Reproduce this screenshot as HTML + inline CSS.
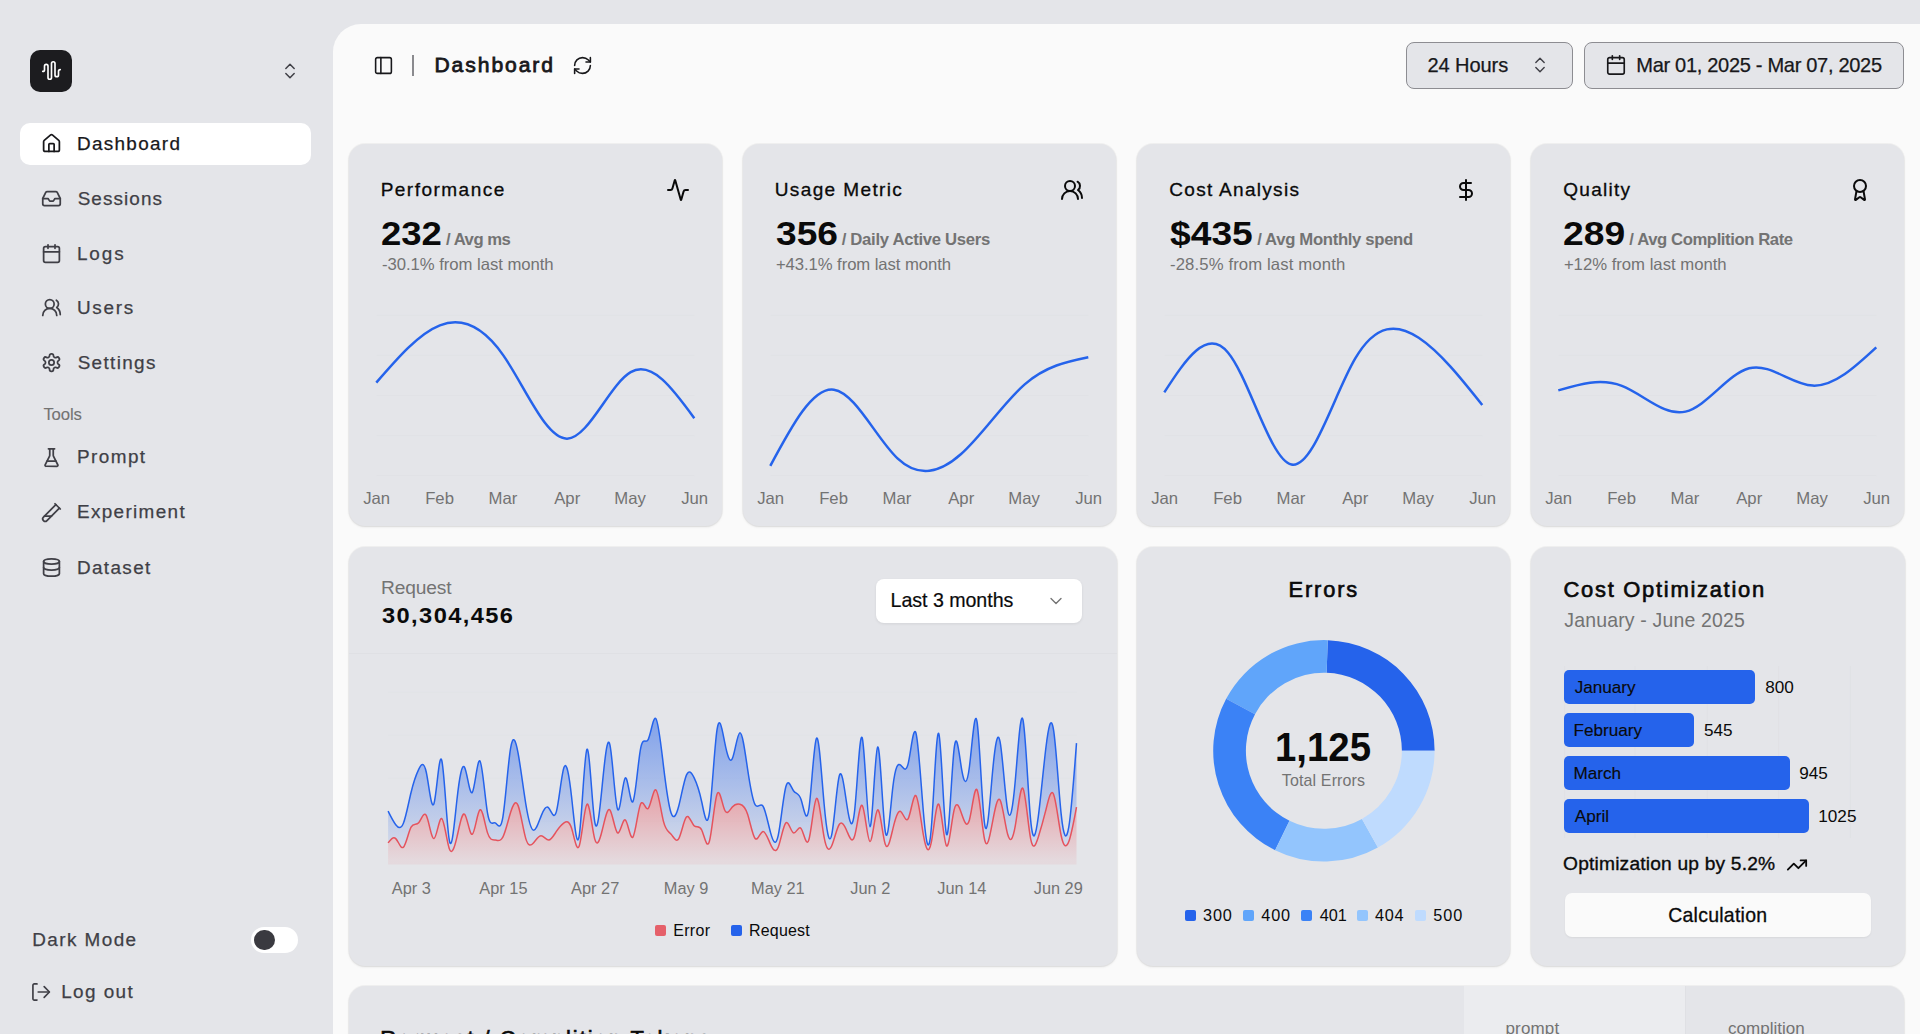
<!DOCTYPE html>
<html><head><meta charset="utf-8"><title>Dashboard</title>
<style>
html,body{margin:0;padding:0}
body{width:1920px;height:1034px;overflow:hidden;position:relative;background:#e4e5e9;font-family:"Liberation Sans",sans-serif}
.box{position:absolute;box-sizing:border-box}
.ic{position:absolute;overflow:visible}
.t{position:absolute;white-space:nowrap;line-height:1;font-family:"Liberation Sans",sans-serif}
.card{background:#e4e5e9;border-radius:16px;box-shadow:0 0 0 1px rgba(0,0,0,0.035),0 1px 3px rgba(0,0,0,0.07),0 1px 2px rgba(0,0,0,0.04)}
.btn{background:#e4e5e9;border:1.3px solid #8d8d92;border-radius:8px}
.sel{background:#ffffff;border-radius:8px;box-shadow:0 1px 3px rgba(0,0,0,0.08)}
</style></head><body>
<div class="box" style="left:30px;top:50px;width:42px;height:42px;border-radius:10px;background:#1c1c1f"></div>
<svg class="ic" style="left:40.5px;top:60px;" width="21" height="21" viewBox="0 0 24 24" fill="none" stroke="#ffffff" stroke-width="1.9" stroke-linecap="round" stroke-linejoin="round"><path d="M2 13a2 2 0 0 0 2-2V7a2 2 0 0 1 4 0v13a2 2 0 0 0 4 0V4a2 2 0 0 1 4 0v13a2 2 0 0 0 4 0v-4a2 2 0 0 1 2-2"/></svg>
<svg class="ic" style="left:280px;top:60.5px;" width="20" height="20" viewBox="0 0 24 24" fill="none" stroke="#3f3f46" stroke-width="1.8" stroke-linecap="round" stroke-linejoin="round"><path d="m7 15 5 5 5-5"/><path d="m7 9 5-5 5 5"/></svg>
<div class="box" style="left:20px;top:123px;width:291px;height:42px;border-radius:10px;background:#ffffff"></div>
<svg class="ic" style="left:40.5px;top:133.0px;" width="21" height="21" viewBox="0 0 24 24" fill="none" stroke="#18181b" stroke-width="2" stroke-linecap="round" stroke-linejoin="round"><path d="M15 21v-8a1 1 0 0 0-1-1h-4a1 1 0 0 0-1 1v8"/><path d="M3 10a2 2 0 0 1 .709-1.528l7-5.999a2 2 0 0 1 2.582 0l7 5.999A2 2 0 0 1 21 10v9a2 2 0 0 1-2 2H5a2 2 0 0 1-2-2z"/></svg>
<svg class="ic" style="left:40.5px;top:188.4px;" width="21" height="21" viewBox="0 0 24 24" fill="none" stroke="#3f3f46" stroke-width="2" stroke-linecap="round" stroke-linejoin="round"><polyline points="22 12 16 12 14 15 10 15 8 12 2 12"/><path d="M5.45 5.11 2 12v6a2 2 0 0 0 2 2h16a2 2 0 0 0 2-2v-6l-3.45-6.89A2 2 0 0 0 16.76 4H7.24a2 2 0 0 0-1.79 1.11z"/></svg>
<svg class="ic" style="left:40.5px;top:243.39999999999998px;" width="21" height="21" viewBox="0 0 24 24" fill="none" stroke="#3f3f46" stroke-width="2" stroke-linecap="round" stroke-linejoin="round"><path d="M8 2v4"/><path d="M16 2v4"/><rect width="18" height="18" x="3" y="4" rx="2"/><path d="M3 10h18"/></svg>
<svg class="ic" style="left:40.5px;top:297.3px;" width="21" height="21" viewBox="0 0 24 24" fill="none" stroke="#3f3f46" stroke-width="2" stroke-linecap="round" stroke-linejoin="round"><path d="M18 21a8 8 0 0 0-16 0"/><circle cx="10" cy="8" r="5"/><path d="M22 20c0-3.37-2-6.5-4-8a5 5 0 0 0-.45-8.3"/></svg>
<svg class="ic" style="left:40.5px;top:352.3px;" width="21" height="21" viewBox="0 0 24 24" fill="none" stroke="#3f3f46" stroke-width="2" stroke-linecap="round" stroke-linejoin="round"><path d="M12.22 2h-.44a2 2 0 0 0-2 2v.18a2 2 0 0 1-1 1.73l-.43.25a2 2 0 0 1-2 0l-.15-.08a2 2 0 0 0-2.73.73l-.22.38a2 2 0 0 0 .73 2.73l.15.1a2 2 0 0 1 1 1.72v.51a2 2 0 0 1-1 1.74l-.15.09a2 2 0 0 0-.73 2.73l.22.38a2 2 0 0 0 2.73.73l.15-.08a2 2 0 0 1 2 0l.43.25a2 2 0 0 1 1 1.73V20a2 2 0 0 0 2 2h.44a2 2 0 0 0 2-2v-.18a2 2 0 0 1 1-1.73l.43-.25a2 2 0 0 1 2 0l.15.08a2 2 0 0 0 2.73-.73l.22-.39a2 2 0 0 0-.73-2.73l-.15-.08a2 2 0 0 1-1-1.74v-.5a2 2 0 0 1 1-1.74l.15-.09a2 2 0 0 0 .73-2.73l-.22-.38a2 2 0 0 0-2.73-.73l-.15.08a2 2 0 0 1-2 0l-.43-.25a2 2 0 0 1-1-1.73V4a2 2 0 0 0-2-2z"/><circle cx="12" cy="12" r="3"/></svg>
<svg class="ic" style="left:40.5px;top:446.9px;" width="21" height="21" viewBox="0 0 24 24" fill="none" stroke="#3f3f46" stroke-width="2" stroke-linecap="round" stroke-linejoin="round"><path d="M10 2v7.527a2 2 0 0 1-.211.896L4.72 20.55a1 1 0 0 0 .9 1.45h12.76a1 1 0 0 0 .9-1.45l-5.069-10.127A2 2 0 0 1 14 9.527V2"/><path d="M8.5 2h7"/><path d="M7 16h10"/></svg>
<svg class="ic" style="left:40.5px;top:501.9px;" width="21" height="21" viewBox="0 0 24 24" fill="none" stroke="#3f3f46" stroke-width="2" stroke-linecap="round" stroke-linejoin="round"><path d="M21 7 6.82 21.18a2.83 2.83 0 0 1-3.99-.01a2.83 2.83 0 0 1 0-4L17 3"/><path d="m16 2 6 6"/><path d="M12 16H4"/></svg>
<svg class="ic" style="left:40.5px;top:557.0px;" width="21" height="21" viewBox="0 0 24 24" fill="none" stroke="#3f3f46" stroke-width="2" stroke-linecap="round" stroke-linejoin="round"><ellipse cx="12" cy="5" rx="9" ry="3"/><path d="M3 5V19A9 3 0 0 0 21 19V5"/><path d="M3 12A9 3 0 0 0 21 12"/></svg>
<div class="box" style="left:251px;top:927px;width:47px;height:26px;border-radius:13px;background:#ffffff"></div>
<div class="box" style="left:254px;top:929.5px;width:20.5px;height:20.5px;border-radius:50%;background:#3a3a40"></div>
<svg class="ic" style="left:31px;top:982px;" width="20" height="20" viewBox="0 0 24 24" fill="none" stroke="#3f3f46" stroke-width="2" stroke-linecap="round" stroke-linejoin="round"><path d="M7.2 2.3H3.9a1.6 1.6 0 0 0-1.6 1.6v16.2a1.6 1.6 0 0 0 1.6 1.6h3.3"/><path d="M8.6 12h13"/><path d="m15.8 5.6 6.3 6.4-6.3 6.4"/></svg>
<div class="box" style="left:333px;top:23.5px;width:1600px;height:1100px;border-top-left-radius:28px;background:#fafafa"></div>
<svg class="ic" style="left:372.5px;top:55px;" width="21" height="21" viewBox="0 0 24 24" fill="none" stroke="#18181b" stroke-width="1.8" stroke-linecap="round" stroke-linejoin="round"><rect width="18" height="18" x="3" y="3" rx="2"/><path d="M9 3v18"/></svg>
<div class="box" style="left:412px;top:55px;width:2px;height:20.5px;background:#8a8a8e"></div>
<svg class="ic" style="left:571.5px;top:55px;" width="21" height="21" viewBox="0 0 24 24" fill="none" stroke="#18181b" stroke-width="1.8" stroke-linecap="round" stroke-linejoin="round"><path d="M3 12a9 9 0 0 1 9-9 9.75 9.75 0 0 1 6.74 2.74L21 8"/><path d="M21 3v5h-5"/><path d="M21 12a9 9 0 0 1-9 9 9.75 9.75 0 0 1-6.74-2.74L3 16"/><path d="M8 16H3v5"/></svg>
<div class="box btn" style="left:1406px;top:42px;width:166.5px;height:46.5px;"></div>
<svg class="ic" style="left:1530px;top:54.8px;" width="20" height="20" viewBox="0 0 24 24" fill="none" stroke="#3f3f46" stroke-width="1.7" stroke-linecap="round" stroke-linejoin="round"><path d="m7 15 5 5 5-5"/><path d="m7 9 5-5 5 5"/></svg>
<div class="box btn" style="left:1584px;top:42px;width:320px;height:46.5px;"></div>
<svg class="ic" style="left:1605px;top:53.8px;" width="22" height="22" viewBox="0 0 24 24" fill="none" stroke="#18181b" stroke-width="1.8" stroke-linecap="round" stroke-linejoin="round"><path d="M8 2v4"/><path d="M16 2v4"/><rect width="18" height="18" x="3" y="4" rx="2"/><path d="M3 10h18"/></svg>
<div class="box card" style="left:349px;top:144px;width:373px;height:382px"></div>
<svg class="ic" style="left:665.5px;top:177.5px;" width="24" height="24" viewBox="0 0 24 24" fill="none" stroke="#0a0a0a" stroke-width="2" stroke-linecap="round" stroke-linejoin="round"><path d="M22 12h-2.48a2 2 0 0 0-1.93 1.46l-2.35 8.36a.25.25 0 0 1-.48 0L9.24 2.18a.25.25 0 0 0-.48 0l-2.35 8.36A2 2 0 0 1 4.49 12H2"/></svg>
<svg class="ic" style="left:0;top:0" width="1920" height="1034"><g stroke="#e1e2e6" stroke-width="1"><line x1="376.5" x2="694.4" y1="315.4" y2="315.4"/><line x1="376.5" x2="694.4" y1="355.4" y2="355.4"/><line x1="376.5" x2="694.4" y1="395.5" y2="395.5"/><line x1="376.5" x2="694.4" y1="435.6" y2="435.6"/><line x1="376.5" x2="694.4" y1="475.7" y2="475.7"/></g><path d="M376.3,382.66C397.5,358.13,418.7,333.6,439.9,325.36C461.1,317.12,482.3,325.18,503.5,355.66C524.7,386.14,545.9,439.06,567.1,438.64C588.3,438.22,609.5,384.47,630.7,372.17C651.9,359.87,673.1,389.03,694.3,418.18" fill="none" stroke="#2563eb" stroke-width="2.5"/></svg>
<div class="box card" style="left:743px;top:144px;width:373px;height:382px"></div>
<svg class="ic" style="left:1059.5px;top:177.5px;" width="24" height="24" viewBox="0 0 24 24" fill="none" stroke="#0a0a0a" stroke-width="2" stroke-linecap="round" stroke-linejoin="round"><path d="M18 21a8 8 0 0 0-16 0"/><circle cx="10" cy="8" r="5"/><path d="M22 20c0-3.37-2-6.5-4-8a5 5 0 0 0-.45-8.3"/></svg>
<svg class="ic" style="left:0;top:0" width="1920" height="1034"><g stroke="#e1e2e6" stroke-width="1"><line x1="770.5" x2="1088.4" y1="315.4" y2="315.4"/><line x1="770.5" x2="1088.4" y1="355.4" y2="355.4"/><line x1="770.5" x2="1088.4" y1="395.5" y2="395.5"/><line x1="770.5" x2="1088.4" y1="435.6" y2="435.6"/><line x1="770.5" x2="1088.4" y1="475.7" y2="475.7"/></g><path d="M770.3,465.88C791.5,426.26,812.7,386.64,833.9,389.66C855.1,392.68,876.3,438.33,897.5,458.41C918.7,478.49,939.9,472.99,961.1,454.05C982.3,435.11,1003.5,402.73,1024.7,384.35C1045.9,365.97,1067.1,361.6,1088.3,357.22" fill="none" stroke="#2563eb" stroke-width="2.5"/></svg>
<div class="box card" style="left:1137px;top:144px;width:373px;height:382px"></div>
<svg class="ic" style="left:1453.5px;top:177.5px;" width="24" height="24" viewBox="0 0 24 24" fill="none" stroke="#0a0a0a" stroke-width="2" stroke-linecap="round" stroke-linejoin="round"><line x1="12" x2="12" y1="2" y2="22"/><path d="M17 5H9.5a3.5 3.5 0 0 0 0 7h5a3.5 3.5 0 0 1 0 7H6"/></svg>
<svg class="ic" style="left:0;top:0" width="1920" height="1034"><g stroke="#e1e2e6" stroke-width="1"><line x1="1164.5" x2="1482.4" y1="315.4" y2="315.4"/><line x1="1164.5" x2="1482.4" y1="355.4" y2="355.4"/><line x1="1164.5" x2="1482.4" y1="395.5" y2="395.5"/><line x1="1164.5" x2="1482.4" y1="435.6" y2="435.6"/><line x1="1164.5" x2="1482.4" y1="475.7" y2="475.7"/></g><path d="M1164.3,392.33C1185.5,359.85,1206.7,327.37,1227.9,352.45C1249.1,377.53,1270.3,460.16,1291.5,464.53C1312.7,468.9,1333.9,395.01,1355.1,358.72C1376.3,322.43,1397.5,323.75,1418.7,337.73C1439.9,351.71,1461.1,378.37,1482.3,405.02" fill="none" stroke="#2563eb" stroke-width="2.5"/></svg>
<div class="box card" style="left:1531px;top:144px;width:373px;height:382px"></div>
<svg class="ic" style="left:1847.5px;top:177.5px;" width="24" height="24" viewBox="0 0 24 24" fill="none" stroke="#0a0a0a" stroke-width="2" stroke-linecap="round" stroke-linejoin="round"><path d="m15.477 12.89 1.515 8.526a.5.5 0 0 1-.81.47l-3.58-2.687a1 1 0 0 0-1.197 0l-3.586 2.686a.5.5 0 0 1-.81-.469l1.514-8.526"/><circle cx="12" cy="8" r="6"/></svg>
<svg class="ic" style="left:0;top:0" width="1920" height="1034"><g stroke="#e1e2e6" stroke-width="1"><line x1="1558.5" x2="1876.4" y1="315.4" y2="315.4"/><line x1="1558.5" x2="1876.4" y1="355.4" y2="355.4"/><line x1="1558.5" x2="1876.4" y1="395.5" y2="395.5"/><line x1="1558.5" x2="1876.4" y1="435.6" y2="435.6"/><line x1="1558.5" x2="1876.4" y1="475.7" y2="475.7"/></g><path d="M1558.3,390.41C1579.5,384.05,1600.7,377.69,1621.9,385.85C1643.1,394.01,1664.3,416.69,1685.5,411.65C1706.7,406.61,1727.9,373.84,1749.1,368.33C1770.3,362.82,1791.5,384.56,1812.7,385.6C1833.9,386.64,1855.1,366.97,1876.3,347.31" fill="none" stroke="#2563eb" stroke-width="2.5"/></svg>
<div class="box card" style="left:349px;top:547px;width:768px;height:419px"></div>
<div class="box" style="left:349px;top:652.5px;width:768px;height:1px;background:#dfe0e4"></div>
<div class="box sel" style="left:875.5px;top:578.5px;width:206.5px;height:44.5px"></div>
<svg class="ic" style="left:1046px;top:590.5px;" width="20" height="20" viewBox="0 0 24 24" fill="none" stroke="#737373" stroke-width="1.6" stroke-linecap="round" stroke-linejoin="round"><path d="m6 9 6 6 6-6"/></svg>
<svg class="ic" style="left:0;top:0" width="1920" height="1034">
<defs>
<linearGradient id="gB" x1="0" y1="0" x2="0" y2="1"><stop offset="5%" stop-color="#2563eb" stop-opacity="0.5"/><stop offset="95%" stop-color="#2563eb" stop-opacity="0.1"/></linearGradient>
<linearGradient id="gR" x1="0" y1="0" x2="0" y2="1"><stop offset="5%" stop-color="#e8505a" stop-opacity="0.45"/><stop offset="95%" stop-color="#e8505a" stop-opacity="0.08"/></linearGradient>
</defs>
<g stroke="#e2e3e7" stroke-width="1"><line x1="388" x2="1077" y1="692.4" y2="692.4"/><line x1="388" x2="1077" y1="735.4" y2="735.4"/><line x1="388" x2="1077" y1="778.4" y2="778.4"/><line x1="388" x2="1077" y1="821.4" y2="821.4"/></g>
<path d="M388.1,842.9C390.65,839.5,393.2,836.1,395.75,838.6C398.3,841.1,400.85,849.49,403.4,847.2C405.95,844.91,408.5,831.93,411.05,827.13C413.6,822.33,416.15,825.71,418.7,822.83C421.25,819.96,423.79,810.83,426.34,815.67C428.89,820.51,431.44,839.32,433.99,838.6C436.54,837.88,439.09,817.64,441.64,818.53C444.19,819.43,446.74,841.46,449.29,848.63C451.84,855.81,454.39,848.14,456.94,837.17C459.49,826.19,462.04,811.92,464.59,814.23C467.14,816.54,469.69,835.44,472.24,834.3C474.79,833.16,477.34,812,479.89,809.93C482.44,807.87,484.99,824.9,487.54,832.87C490.09,840.84,492.63,839.75,495.18,840.03C497.73,840.32,500.28,841.97,502.83,837.17C505.38,832.36,507.93,821.09,510.48,812.8C513.03,804.51,515.58,799.22,518.13,805.63C520.68,812.05,523.23,830.18,525.78,838.6C528.33,847.02,530.88,845.73,533.43,842.9C535.98,840.07,538.53,835.71,541.08,835.73C543.63,835.75,546.18,840.16,548.73,840.03C551.28,839.91,553.83,835.26,556.38,831.43C558.93,827.61,561.47,824.61,564.02,822.83C566.57,821.06,569.12,820.51,571.67,828.57C574.22,836.63,576.77,853.3,579.32,845.77C581.87,838.24,584.42,806.51,586.97,804.2C589.52,801.89,592.07,829,594.62,838.6C597.17,848.2,599.72,840.3,602.27,830C604.82,819.7,607.37,807,609.92,809.93C612.47,812.87,615.02,831.45,617.57,832.87C620.12,834.28,622.67,818.54,625.22,819.97C627.77,821.4,630.31,840.01,632.86,837.17C635.41,834.33,637.96,810.04,640.51,804.2C643.06,798.36,645.61,810.95,648.16,808.5C650.71,806.05,653.26,788.54,655.81,789.87C658.36,791.19,660.91,811.34,663.46,821.4C666.01,831.46,668.56,831.44,671.11,834.3C673.66,837.16,676.21,842.92,678.76,838.6C681.31,834.28,683.86,819.89,686.41,817.1C688.96,814.31,691.51,823.14,694.06,825.7C696.61,828.26,699.15,824.57,701.7,830C704.25,835.43,706.8,849.98,709.35,841.47C711.9,832.95,714.45,801.37,717,794.17C719.55,786.97,722.1,804.15,724.65,809.93C727.2,815.71,729.75,810.09,732.3,807.07C734.85,804.04,737.4,803.61,739.95,804.2C742.5,804.79,745.05,806.4,747.6,814.23C750.15,822.06,752.7,836.11,755.25,838.6C757.8,841.09,760.35,832.03,762.9,831.43C765.45,830.83,767.99,838.69,770.54,844.33C773.09,849.98,775.64,853.41,778.19,847.2C780.74,840.99,783.29,825.15,785.84,822.83C788.39,820.51,790.94,831.72,793.49,832.87C796.04,834.01,798.59,825.1,801.14,828.57C803.69,832.03,806.24,847.87,808.79,840.03C811.34,832.2,813.89,800.68,816.44,798.47C818.99,796.25,821.54,823.35,824.09,837.17C826.64,850.99,829.19,851.54,831.74,845.77C834.29,840,836.83,827.9,839.38,824.27C841.93,820.63,844.48,825.45,847.03,831.43C849.58,837.41,852.13,844.56,854.68,835.73C857.23,826.91,859.78,802.13,862.33,805.63C864.88,809.14,867.43,840.94,869.98,841.47C872.53,841.99,875.08,811.25,877.63,809.93C880.18,808.62,882.73,836.73,885.28,844.33C887.83,851.94,890.38,839.03,892.93,828.57C895.48,818.1,898.03,810.07,900.58,811.37C903.13,812.66,905.67,823.27,908.22,818.53C910.77,813.8,913.32,793.72,915.87,795.6C918.42,797.48,920.97,821.32,923.52,835.73C926.07,850.14,928.62,855.12,931.17,842.9C933.72,830.68,936.27,801.26,938.82,804.2C941.37,807.14,943.92,842.42,946.47,845.77C949.02,849.11,951.57,820.51,954.12,809.93C956.67,799.36,959.22,806.8,961.77,814.23C964.32,821.67,966.87,829.09,969.42,819.97C971.97,810.85,974.51,785.19,977.06,789.87C979.61,794.54,982.16,829.55,984.71,840.03C987.26,850.52,989.81,836.49,992.36,822.83C994.91,809.18,997.46,795.9,1000.01,799.9C1002.56,803.9,1005.11,825.19,1007.66,834.3C1010.21,843.41,1012.76,840.34,1015.31,825.7C1017.86,811.06,1020.41,784.87,1022.96,788.43C1025.51,792,1028.06,825.33,1030.61,838.6C1033.16,851.87,1035.71,845.08,1038.26,837.17C1040.81,829.25,1043.35,820.21,1045.9,809.93C1048.45,799.66,1051,788.15,1053.55,794.17C1056.1,800.19,1058.65,823.74,1061.2,835.73C1063.75,847.73,1066.3,848.17,1068.85,841.47C1071.4,834.76,1073.95,820.91,1076.5,807.07L1076.50,864.4L388.10,864.4Z" fill="url(#gR)"/>
<path d="M388.1,811.08C390.65,816.23,393.2,821.38,395.75,824.7C398.3,828.02,400.85,829.51,403.4,823.26C405.95,817.02,408.5,803.03,411.05,792.45C413.6,781.86,416.15,774.67,418.7,769.37C421.25,764.07,423.79,760.65,426.34,772.52C428.89,784.39,431.44,811.54,433.99,803.48C436.54,795.42,439.09,752.15,441.64,759.91C444.19,767.67,446.74,826.45,449.29,840.18C451.84,853.9,454.39,822.57,456.94,799.76C459.49,776.94,462.04,762.64,464.59,767.36C467.14,772.09,469.69,795.84,472.24,792.45C474.79,789.06,477.34,758.52,479.89,760.91C482.44,763.31,484.99,798.62,487.54,813.23C490.09,827.84,492.63,821.74,495.18,822.83C497.73,823.93,500.28,832.22,502.83,817.39C505.38,802.55,507.93,764.59,510.48,748.87C513.03,733.16,515.58,739.69,518.13,753.46C520.68,767.23,523.23,788.25,525.78,803.77C528.33,819.29,530.88,829.33,533.43,830.14C535.98,830.96,538.53,822.55,541.08,816.1C543.63,809.64,546.18,805.15,548.73,807.93C551.28,810.7,553.83,820.76,556.38,811.65C558.93,802.55,561.47,774.29,564.02,767.36C566.57,760.44,569.12,774.85,571.67,797.75C574.22,820.65,576.77,852.04,579.32,835.02C581.87,818,584.42,752.57,586.97,749.3C589.52,746.04,592.07,804.95,594.62,821.11C597.17,837.28,599.72,810.71,602.27,784.85C604.82,758.99,607.37,733.85,609.92,744.86C612.47,755.87,615.02,803.04,617.57,809.22C620.12,815.39,622.67,780.58,625.22,777.97C627.77,775.36,630.31,804.97,632.86,801.76C635.41,798.56,637.96,762.55,640.51,749.02C643.06,735.48,645.61,744.42,648.16,739.56C650.71,734.69,653.26,716.01,655.81,718.49C658.36,720.96,660.91,744.6,663.46,765.79C666.01,786.98,668.56,805.73,671.11,812.94C673.66,820.16,676.21,815.84,678.76,806.06C681.31,796.29,683.86,781.06,686.41,775.1C688.96,769.15,691.51,772.47,694.06,777.68C696.61,782.9,699.15,790.01,701.7,801.76C704.25,813.52,706.8,829.93,709.35,813.23C711.9,796.53,714.45,746.74,717,729.95C719.55,713.17,722.1,729.41,724.65,742.14C727.2,754.87,729.75,764.09,732.3,758.62C734.85,753.15,737.4,732.97,739.95,732.68C742.5,732.38,745.05,751.97,747.6,769.08C750.15,786.2,752.7,800.84,755.25,804.92C757.8,808.99,760.35,802.51,762.9,806.06C765.45,809.62,767.99,823.21,770.54,832.58C773.09,841.95,775.64,847.09,778.19,835.59C780.74,824.09,783.29,795.96,785.84,786.71C788.39,777.47,790.94,787.12,793.49,790.73C796.04,794.34,798.59,791.91,801.14,799.76C803.69,807.61,806.24,825.73,808.79,809.5C811.34,793.27,813.89,742.69,816.44,738.27C818.99,733.84,821.54,775.58,824.09,803.77C826.64,831.96,829.19,846.61,831.74,834.59C834.29,822.56,836.83,783.85,839.38,775.53C841.93,767.21,844.48,789.28,847.03,805.92C849.58,822.56,852.13,833.77,854.68,810.22C857.23,786.67,859.78,728.36,862.33,738.27C864.88,748.17,867.43,826.29,869.98,826.7C872.53,827.12,875.08,749.82,877.63,747.01C880.18,744.2,882.73,815.87,885.28,831.72C887.83,847.57,890.38,807.59,892.93,786.43C895.48,765.26,898.03,762.91,900.58,765.07C903.13,767.23,905.67,773.9,908.22,763.35C910.77,752.8,913.32,725.02,915.87,732.82C918.42,740.62,920.97,784.01,923.52,813.52C926.07,843.03,928.62,858.66,931.17,829.71C933.72,800.76,936.27,727.23,938.82,733.68C941.37,740.13,943.92,826.58,946.47,834.16C949.02,841.73,951.57,770.44,954.12,748.87C956.67,727.3,959.22,755.45,961.77,770.23C964.32,785.01,966.87,786.43,969.42,766.79C971.97,747.15,974.51,706.45,977.06,721.78C979.61,737.12,982.16,808.48,984.71,824.7C987.26,840.91,989.81,801.98,992.36,773.96C994.91,745.93,997.46,728.81,1000.01,741.42C1002.56,754.03,1005.11,796.36,1007.66,810.08C1010.21,823.79,1012.76,808.89,1015.31,780.26C1017.86,751.63,1020.41,709.27,1022.96,719.63C1025.51,730,1028.06,793.08,1030.61,819.68C1033.16,846.28,1035.71,836.38,1038.26,816.96C1040.81,797.54,1043.35,768.59,1045.9,747.73C1048.45,726.86,1051,714.09,1053.55,729.95C1056.1,745.82,1058.65,790.33,1061.2,814.38C1063.75,838.42,1066.3,841.99,1068.85,826.7C1071.4,811.42,1073.95,777.28,1076.5,743.14L1076.5,807.07C1073.95,820.91,1071.4,834.76,1068.85,841.47C1066.3,848.17,1063.75,847.73,1061.2,835.73C1058.65,823.74,1056.1,800.19,1053.55,794.17C1051,788.15,1048.45,799.66,1045.9,809.93C1043.35,820.21,1040.81,829.25,1038.26,837.17C1035.71,845.08,1033.16,851.87,1030.61,838.6C1028.06,825.33,1025.51,792,1022.96,788.43C1020.41,784.87,1017.86,811.06,1015.31,825.7C1012.76,840.34,1010.21,843.41,1007.66,834.3C1005.11,825.19,1002.56,803.9,1000.01,799.9C997.46,795.9,994.91,809.18,992.36,822.83C989.81,836.49,987.26,850.52,984.71,840.03C982.16,829.55,979.61,794.54,977.06,789.87C974.51,785.19,971.97,810.85,969.42,819.97C966.87,829.09,964.32,821.67,961.77,814.23C959.22,806.8,956.67,799.36,954.12,809.93C951.57,820.51,949.02,849.11,946.47,845.77C943.92,842.42,941.37,807.14,938.82,804.2C936.27,801.26,933.72,830.68,931.17,842.9C928.62,855.12,926.07,850.14,923.52,835.73C920.97,821.32,918.42,797.48,915.87,795.6C913.32,793.72,910.77,813.8,908.22,818.53C905.67,823.27,903.13,812.66,900.58,811.37C898.03,810.07,895.48,818.1,892.93,828.57C890.38,839.03,887.83,851.94,885.28,844.33C882.73,836.73,880.18,808.62,877.63,809.93C875.08,811.25,872.53,841.99,869.98,841.47C867.43,840.94,864.88,809.14,862.33,805.63C859.78,802.13,857.23,826.91,854.68,835.73C852.13,844.56,849.58,837.41,847.03,831.43C844.48,825.45,841.93,820.63,839.38,824.27C836.83,827.9,834.29,840,831.74,845.77C829.19,851.54,826.64,850.99,824.09,837.17C821.54,823.35,818.99,796.25,816.44,798.47C813.89,800.68,811.34,832.2,808.79,840.03C806.24,847.87,803.69,832.03,801.14,828.57C798.59,825.1,796.04,834.01,793.49,832.87C790.94,831.72,788.39,820.51,785.84,822.83C783.29,825.15,780.74,840.99,778.19,847.2C775.64,853.41,773.09,849.98,770.54,844.33C767.99,838.69,765.45,830.83,762.9,831.43C760.35,832.03,757.8,841.09,755.25,838.6C752.7,836.11,750.15,822.06,747.6,814.23C745.05,806.4,742.5,804.79,739.95,804.2C737.4,803.61,734.85,804.04,732.3,807.07C729.75,810.09,727.2,815.71,724.65,809.93C722.1,804.15,719.55,786.97,717,794.17C714.45,801.37,711.9,832.95,709.35,841.47C706.8,849.98,704.25,835.43,701.7,830C699.15,824.57,696.61,828.26,694.06,825.7C691.51,823.14,688.96,814.31,686.41,817.1C683.86,819.89,681.31,834.28,678.76,838.6C676.21,842.92,673.66,837.16,671.11,834.3C668.56,831.44,666.01,831.46,663.46,821.4C660.91,811.34,658.36,791.19,655.81,789.87C653.26,788.54,650.71,806.05,648.16,808.5C645.61,810.95,643.06,798.36,640.51,804.2C637.96,810.04,635.41,834.33,632.86,837.17C630.31,840.01,627.77,821.4,625.22,819.97C622.67,818.54,620.12,834.28,617.57,832.87C615.02,831.45,612.47,812.87,609.92,809.93C607.37,807,604.82,819.7,602.27,830C599.72,840.3,597.17,848.2,594.62,838.6C592.07,829,589.52,801.89,586.97,804.2C584.42,806.51,581.87,838.24,579.32,845.77C576.77,853.3,574.22,836.63,571.67,828.57C569.12,820.51,566.57,821.06,564.02,822.83C561.47,824.61,558.93,827.61,556.38,831.43C553.83,835.26,551.28,839.91,548.73,840.03C546.18,840.16,543.63,835.75,541.08,835.73C538.53,835.71,535.98,840.07,533.43,842.9C530.88,845.73,528.33,847.02,525.78,838.6C523.23,830.18,520.68,812.05,518.13,805.63C515.58,799.22,513.03,804.51,510.48,812.8C507.93,821.09,505.38,832.36,502.83,837.17C500.28,841.97,497.73,840.32,495.18,840.03C492.63,839.75,490.09,840.84,487.54,832.87C484.99,824.9,482.44,807.87,479.89,809.93C477.34,812,474.79,833.16,472.24,834.3C469.69,835.44,467.14,816.54,464.59,814.23C462.04,811.92,459.49,826.19,456.94,837.17C454.39,848.14,451.84,855.81,449.29,848.63C446.74,841.46,444.19,819.43,441.64,818.53C439.09,817.64,436.54,837.88,433.99,838.6C431.44,839.32,428.89,820.51,426.34,815.67C423.79,810.83,421.25,819.96,418.7,822.83C416.15,825.71,413.6,822.33,411.05,827.13C408.5,831.93,405.95,844.91,403.4,847.2C400.85,849.49,398.3,841.1,395.75,838.6C393.2,836.1,390.65,839.5,388.1,842.9Z" fill="url(#gB)"/>
<path d="M388.1,842.9C390.65,839.5,393.2,836.1,395.75,838.6C398.3,841.1,400.85,849.49,403.4,847.2C405.95,844.91,408.5,831.93,411.05,827.13C413.6,822.33,416.15,825.71,418.7,822.83C421.25,819.96,423.79,810.83,426.34,815.67C428.89,820.51,431.44,839.32,433.99,838.6C436.54,837.88,439.09,817.64,441.64,818.53C444.19,819.43,446.74,841.46,449.29,848.63C451.84,855.81,454.39,848.14,456.94,837.17C459.49,826.19,462.04,811.92,464.59,814.23C467.14,816.54,469.69,835.44,472.24,834.3C474.79,833.16,477.34,812,479.89,809.93C482.44,807.87,484.99,824.9,487.54,832.87C490.09,840.84,492.63,839.75,495.18,840.03C497.73,840.32,500.28,841.97,502.83,837.17C505.38,832.36,507.93,821.09,510.48,812.8C513.03,804.51,515.58,799.22,518.13,805.63C520.68,812.05,523.23,830.18,525.78,838.6C528.33,847.02,530.88,845.73,533.43,842.9C535.98,840.07,538.53,835.71,541.08,835.73C543.63,835.75,546.18,840.16,548.73,840.03C551.28,839.91,553.83,835.26,556.38,831.43C558.93,827.61,561.47,824.61,564.02,822.83C566.57,821.06,569.12,820.51,571.67,828.57C574.22,836.63,576.77,853.3,579.32,845.77C581.87,838.24,584.42,806.51,586.97,804.2C589.52,801.89,592.07,829,594.62,838.6C597.17,848.2,599.72,840.3,602.27,830C604.82,819.7,607.37,807,609.92,809.93C612.47,812.87,615.02,831.45,617.57,832.87C620.12,834.28,622.67,818.54,625.22,819.97C627.77,821.4,630.31,840.01,632.86,837.17C635.41,834.33,637.96,810.04,640.51,804.2C643.06,798.36,645.61,810.95,648.16,808.5C650.71,806.05,653.26,788.54,655.81,789.87C658.36,791.19,660.91,811.34,663.46,821.4C666.01,831.46,668.56,831.44,671.11,834.3C673.66,837.16,676.21,842.92,678.76,838.6C681.31,834.28,683.86,819.89,686.41,817.1C688.96,814.31,691.51,823.14,694.06,825.7C696.61,828.26,699.15,824.57,701.7,830C704.25,835.43,706.8,849.98,709.35,841.47C711.9,832.95,714.45,801.37,717,794.17C719.55,786.97,722.1,804.15,724.65,809.93C727.2,815.71,729.75,810.09,732.3,807.07C734.85,804.04,737.4,803.61,739.95,804.2C742.5,804.79,745.05,806.4,747.6,814.23C750.15,822.06,752.7,836.11,755.25,838.6C757.8,841.09,760.35,832.03,762.9,831.43C765.45,830.83,767.99,838.69,770.54,844.33C773.09,849.98,775.64,853.41,778.19,847.2C780.74,840.99,783.29,825.15,785.84,822.83C788.39,820.51,790.94,831.72,793.49,832.87C796.04,834.01,798.59,825.1,801.14,828.57C803.69,832.03,806.24,847.87,808.79,840.03C811.34,832.2,813.89,800.68,816.44,798.47C818.99,796.25,821.54,823.35,824.09,837.17C826.64,850.99,829.19,851.54,831.74,845.77C834.29,840,836.83,827.9,839.38,824.27C841.93,820.63,844.48,825.45,847.03,831.43C849.58,837.41,852.13,844.56,854.68,835.73C857.23,826.91,859.78,802.13,862.33,805.63C864.88,809.14,867.43,840.94,869.98,841.47C872.53,841.99,875.08,811.25,877.63,809.93C880.18,808.62,882.73,836.73,885.28,844.33C887.83,851.94,890.38,839.03,892.93,828.57C895.48,818.1,898.03,810.07,900.58,811.37C903.13,812.66,905.67,823.27,908.22,818.53C910.77,813.8,913.32,793.72,915.87,795.6C918.42,797.48,920.97,821.32,923.52,835.73C926.07,850.14,928.62,855.12,931.17,842.9C933.72,830.68,936.27,801.26,938.82,804.2C941.37,807.14,943.92,842.42,946.47,845.77C949.02,849.11,951.57,820.51,954.12,809.93C956.67,799.36,959.22,806.8,961.77,814.23C964.32,821.67,966.87,829.09,969.42,819.97C971.97,810.85,974.51,785.19,977.06,789.87C979.61,794.54,982.16,829.55,984.71,840.03C987.26,850.52,989.81,836.49,992.36,822.83C994.91,809.18,997.46,795.9,1000.01,799.9C1002.56,803.9,1005.11,825.19,1007.66,834.3C1010.21,843.41,1012.76,840.34,1015.31,825.7C1017.86,811.06,1020.41,784.87,1022.96,788.43C1025.51,792,1028.06,825.33,1030.61,838.6C1033.16,851.87,1035.71,845.08,1038.26,837.17C1040.81,829.25,1043.35,820.21,1045.9,809.93C1048.45,799.66,1051,788.15,1053.55,794.17C1056.1,800.19,1058.65,823.74,1061.2,835.73C1063.75,847.73,1066.3,848.17,1068.85,841.47C1071.4,834.76,1073.95,820.91,1076.5,807.07" fill="none" stroke="#e5535d" stroke-width="1.5"/>
<path d="M388.1,811.08C390.65,816.23,393.2,821.38,395.75,824.7C398.3,828.02,400.85,829.51,403.4,823.26C405.95,817.02,408.5,803.03,411.05,792.45C413.6,781.86,416.15,774.67,418.7,769.37C421.25,764.07,423.79,760.65,426.34,772.52C428.89,784.39,431.44,811.54,433.99,803.48C436.54,795.42,439.09,752.15,441.64,759.91C444.19,767.67,446.74,826.45,449.29,840.18C451.84,853.9,454.39,822.57,456.94,799.76C459.49,776.94,462.04,762.64,464.59,767.36C467.14,772.09,469.69,795.84,472.24,792.45C474.79,789.06,477.34,758.52,479.89,760.91C482.44,763.31,484.99,798.62,487.54,813.23C490.09,827.84,492.63,821.74,495.18,822.83C497.73,823.93,500.28,832.22,502.83,817.39C505.38,802.55,507.93,764.59,510.48,748.87C513.03,733.16,515.58,739.69,518.13,753.46C520.68,767.23,523.23,788.25,525.78,803.77C528.33,819.29,530.88,829.33,533.43,830.14C535.98,830.96,538.53,822.55,541.08,816.1C543.63,809.64,546.18,805.15,548.73,807.93C551.28,810.7,553.83,820.76,556.38,811.65C558.93,802.55,561.47,774.29,564.02,767.36C566.57,760.44,569.12,774.85,571.67,797.75C574.22,820.65,576.77,852.04,579.32,835.02C581.87,818,584.42,752.57,586.97,749.3C589.52,746.04,592.07,804.95,594.62,821.11C597.17,837.28,599.72,810.71,602.27,784.85C604.82,758.99,607.37,733.85,609.92,744.86C612.47,755.87,615.02,803.04,617.57,809.22C620.12,815.39,622.67,780.58,625.22,777.97C627.77,775.36,630.31,804.97,632.86,801.76C635.41,798.56,637.96,762.55,640.51,749.02C643.06,735.48,645.61,744.42,648.16,739.56C650.71,734.69,653.26,716.01,655.81,718.49C658.36,720.96,660.91,744.6,663.46,765.79C666.01,786.98,668.56,805.73,671.11,812.94C673.66,820.16,676.21,815.84,678.76,806.06C681.31,796.29,683.86,781.06,686.41,775.1C688.96,769.15,691.51,772.47,694.06,777.68C696.61,782.9,699.15,790.01,701.7,801.76C704.25,813.52,706.8,829.93,709.35,813.23C711.9,796.53,714.45,746.74,717,729.95C719.55,713.17,722.1,729.41,724.65,742.14C727.2,754.87,729.75,764.09,732.3,758.62C734.85,753.15,737.4,732.97,739.95,732.68C742.5,732.38,745.05,751.97,747.6,769.08C750.15,786.2,752.7,800.84,755.25,804.92C757.8,808.99,760.35,802.51,762.9,806.06C765.45,809.62,767.99,823.21,770.54,832.58C773.09,841.95,775.64,847.09,778.19,835.59C780.74,824.09,783.29,795.96,785.84,786.71C788.39,777.47,790.94,787.12,793.49,790.73C796.04,794.34,798.59,791.91,801.14,799.76C803.69,807.61,806.24,825.73,808.79,809.5C811.34,793.27,813.89,742.69,816.44,738.27C818.99,733.84,821.54,775.58,824.09,803.77C826.64,831.96,829.19,846.61,831.74,834.59C834.29,822.56,836.83,783.85,839.38,775.53C841.93,767.21,844.48,789.28,847.03,805.92C849.58,822.56,852.13,833.77,854.68,810.22C857.23,786.67,859.78,728.36,862.33,738.27C864.88,748.17,867.43,826.29,869.98,826.7C872.53,827.12,875.08,749.82,877.63,747.01C880.18,744.2,882.73,815.87,885.28,831.72C887.83,847.57,890.38,807.59,892.93,786.43C895.48,765.26,898.03,762.91,900.58,765.07C903.13,767.23,905.67,773.9,908.22,763.35C910.77,752.8,913.32,725.02,915.87,732.82C918.42,740.62,920.97,784.01,923.52,813.52C926.07,843.03,928.62,858.66,931.17,829.71C933.72,800.76,936.27,727.23,938.82,733.68C941.37,740.13,943.92,826.58,946.47,834.16C949.02,841.73,951.57,770.44,954.12,748.87C956.67,727.3,959.22,755.45,961.77,770.23C964.32,785.01,966.87,786.43,969.42,766.79C971.97,747.15,974.51,706.45,977.06,721.78C979.61,737.12,982.16,808.48,984.71,824.7C987.26,840.91,989.81,801.98,992.36,773.96C994.91,745.93,997.46,728.81,1000.01,741.42C1002.56,754.03,1005.11,796.36,1007.66,810.08C1010.21,823.79,1012.76,808.89,1015.31,780.26C1017.86,751.63,1020.41,709.27,1022.96,719.63C1025.51,730,1028.06,793.08,1030.61,819.68C1033.16,846.28,1035.71,836.38,1038.26,816.96C1040.81,797.54,1043.35,768.59,1045.9,747.73C1048.45,726.86,1051,714.09,1053.55,729.95C1056.1,745.82,1058.65,790.33,1061.2,814.38C1063.75,838.42,1066.3,841.99,1068.85,826.7C1071.4,811.42,1073.95,777.28,1076.5,743.14" fill="none" stroke="#2563eb" stroke-width="1.5"/>
</svg>
<div class="box" style="left:655px;top:925px;width:11px;height:10.5px;border-radius:2px;background:#e5606a"></div>
<div class="box" style="left:731px;top:925px;width:11px;height:10.5px;border-radius:2px;background:#2563eb"></div>
<div class="box card" style="left:1137px;top:547px;width:373px;height:419px"></div>
<svg class="ic" style="left:0;top:0" width="1920" height="1034"><path d="M1434.60,750.80A110.7,110.7 0 0 0 1327.76,640.17L1326.62,672.85A78.0,78.0 0 0 1 1401.90,750.80Z" fill="#2563eb"/><path d="M1327.76,640.17A110.7,110.7 0 0 0 1226.16,698.83L1255.03,714.18A78.0,78.0 0 0 1 1326.62,672.85Z" fill="#60a5fa"/><path d="M1226.16,698.83A110.7,110.7 0 0 0 1275.09,850.16L1289.51,820.81A78.0,78.0 0 0 1 1255.03,714.18Z" fill="#3b82f6"/><path d="M1275.09,850.16A110.7,110.7 0 0 0 1377.91,847.43L1361.95,818.89A78.0,78.0 0 0 1 1289.51,820.81Z" fill="#93c5fd"/><path d="M1377.91,847.43A110.7,110.7 0 0 0 1434.60,750.80L1401.90,750.80A78.0,78.0 0 0 1 1361.95,818.89Z" fill="#bfdbfe"/></svg>
<div class="box" style="left:1185px;top:910.3px;width:10.5px;height:10.5px;border-radius:2px;background:#2563eb"></div>
<div class="box" style="left:1243px;top:910.3px;width:10.5px;height:10.5px;border-radius:2px;background:#60a5fa"></div>
<div class="box" style="left:1301px;top:910.3px;width:10.5px;height:10.5px;border-radius:2px;background:#3b82f6"></div>
<div class="box" style="left:1357px;top:910.3px;width:10.5px;height:10.5px;border-radius:2px;background:#93c5fd"></div>
<div class="box" style="left:1415.4px;top:910.3px;width:10.5px;height:10.5px;border-radius:2px;background:#bfdbfe"></div>
<div class="box card" style="left:1531px;top:547px;width:373.5px;height:419px"></div>
<svg class="ic" style="left:0;top:0" width="1920" height="1034"><g stroke="#e0e1e5" stroke-width="1"><line x1="1564.6" x2="1564.6" y1="666" y2="838"/><line x1="1635.0" x2="1635.0" y1="666" y2="838"/><line x1="1707.3" x2="1707.3" y1="666" y2="838"/><line x1="1778.6" x2="1778.6" y1="666" y2="838"/><line x1="1850.4" x2="1850.4" y1="666" y2="838"/></g></svg>
<div class="box" style="left:1564px;top:670.00px;width:191.0px;height:34px;border-radius:5px;background:#2563eb"></div>
<div class="box" style="left:1564px;top:713.03px;width:130.3px;height:34px;border-radius:5px;background:#2563eb"></div>
<div class="box" style="left:1564px;top:756.06px;width:225.8px;height:34px;border-radius:5px;background:#2563eb"></div>
<div class="box" style="left:1564px;top:799.09px;width:244.7px;height:34px;border-radius:5px;background:#2563eb"></div>
<svg class="ic" style="left:1785.5px;top:853.5px;" width="22" height="22" viewBox="0 0 24 24" fill="none" stroke="#0a0a0a" stroke-width="2" stroke-linecap="round" stroke-linejoin="round"><polyline points="22 7 13.5 15.5 8.5 10.5 2 17"/><polyline points="16 7 22 7 22 13"/></svg>
<div class="box" style="left:1565px;top:893px;width:305.5px;height:44px;border-radius:7px;background:#fafafa;box-shadow:0 1px 2px rgba(0,0,0,0.06)"></div>
<div class="box card" style="left:349px;top:986px;width:1555px;height:200px"></div>
<div class="box" style="left:1464px;top:986px;width:221px;height:200px;background:#ebecef"></div>
<div class="box" style="left:1685px;top:986px;width:1px;height:200px;background:#dfe0e4"></div>
<div class="t" style="left:76.95px;top:134.50px;font-size:18.9px;color:#18181b;letter-spacing:1.326px;-webkit-text-stroke:0.25px #18181b;">Dashboard</div>
<div class="t" style="left:77.64px;top:189.90px;font-size:18.9px;color:#3f3f46;letter-spacing:1.107px;-webkit-text-stroke:0.25px #3f3f46;">Sessions</div>
<div class="t" style="left:76.95px;top:244.90px;font-size:18.9px;color:#3f3f46;letter-spacing:1.916px;-webkit-text-stroke:0.25px #3f3f46;">Logs</div>
<div class="t" style="left:77.04px;top:298.80px;font-size:18.9px;color:#3f3f46;letter-spacing:1.697px;-webkit-text-stroke:0.25px #3f3f46;">Users</div>
<div class="t" style="left:77.64px;top:353.80px;font-size:18.9px;color:#3f3f46;letter-spacing:1.350px;-webkit-text-stroke:0.25px #3f3f46;">Settings</div>
<div class="t" style="left:76.95px;top:448.40px;font-size:18.9px;color:#3f3f46;letter-spacing:1.454px;-webkit-text-stroke:0.25px #3f3f46;">Prompt</div>
<div class="t" style="left:76.95px;top:503.40px;font-size:18.9px;color:#3f3f46;letter-spacing:1.356px;-webkit-text-stroke:0.25px #3f3f46;">Experiment</div>
<div class="t" style="left:76.95px;top:558.50px;font-size:18.9px;color:#3f3f46;letter-spacing:1.376px;-webkit-text-stroke:0.25px #3f3f46;">Dataset</div>
<div class="t" style="left:43.42px;top:406.75px;font-size:16.72px;color:#737373;letter-spacing:-0.151px;-webkit-text-stroke:0.1px #737373;">Tools</div>
<div class="t" style="left:32.25px;top:931.30px;font-size:18.9px;color:#3f3f46;letter-spacing:1.432px;-webkit-text-stroke:0.25px #3f3f46;">Dark Mode</div>
<div class="t" style="left:61.15px;top:982.75px;font-size:18.9px;color:#3f3f46;letter-spacing:1.438px;-webkit-text-stroke:0.25px #3f3f46;">Log out</div>
<div class="t" style="left:434.47px;top:54.06px;font-size:21.08px;color:#18181b;letter-spacing:1.933px;-webkit-text-stroke:0.8px #18181b;">Dashboard</div>
<div class="t" style="left:1427.39px;top:55.32px;font-size:20.06px;color:#18181b;letter-spacing:-0.066px;-webkit-text-stroke:0.25px #18181b;">24 Hours</div>
<div class="t" style="left:1636.25px;top:55.32px;font-size:20.06px;color:#18181b;letter-spacing:-0.317px;-webkit-text-stroke:0.25px #18181b;">Mar 01, 2025 - Mar 07, 2025</div>
<div class="t" style="left:380.64px;top:179.68px;font-size:19.04px;color:#0a0a0a;letter-spacing:1.471px;-webkit-text-stroke:0.3px #0a0a0a;">Performance</div>
<div class="t" style="left:381.43px;top:216.70px;font-size:33.43px;color:#0a0a0a;transform:scaleX(1.0924);transform-origin:0 0;font-weight:700;">232</div>
<div class="t" style="left:446.04px;top:231.85px;font-size:16.72px;color:#737373;font-weight:700;letter-spacing:-0.506px;">/ Avg ms</div>
<div class="t" style="left:381.96px;top:257.35px;font-size:16.72px;color:#737373;letter-spacing:-0.048px;">-30.1% from last month</div>
<div class="t" style="left:363.23px;top:490.85px;font-size:16.72px;color:#737373;">Jan</div>
<div class="t" style="left:425.16px;top:490.85px;font-size:16.72px;color:#737373;">Feb</div>
<div class="t" style="left:488.56px;top:490.85px;font-size:16.72px;color:#737373;">Mar</div>
<div class="t" style="left:554.21px;top:490.85px;font-size:16.72px;color:#737373;">Apr</div>
<div class="t" style="left:614.24px;top:490.85px;font-size:16.72px;color:#737373;">May</div>
<div class="t" style="left:681.23px;top:490.85px;font-size:16.72px;color:#737373;">Jun</div>
<div class="t" style="left:774.73px;top:179.68px;font-size:19.04px;color:#0a0a0a;letter-spacing:1.365px;-webkit-text-stroke:0.3px #0a0a0a;">Usage Metric</div>
<div class="t" style="left:775.85px;top:216.70px;font-size:33.43px;color:#0a0a0a;transform:scaleX(1.1115);transform-origin:0 0;font-weight:700;">356</div>
<div class="t" style="left:841.64px;top:231.85px;font-size:16.72px;color:#737373;font-weight:700;letter-spacing:-0.303px;">/ Daily Active Users</div>
<div class="t" style="left:775.88px;top:257.35px;font-size:16.72px;color:#737373;letter-spacing:-0.078px;">+43.1% from last month</div>
<div class="t" style="left:757.23px;top:490.85px;font-size:16.72px;color:#737373;">Jan</div>
<div class="t" style="left:819.16px;top:490.85px;font-size:16.72px;color:#737373;">Feb</div>
<div class="t" style="left:882.56px;top:490.85px;font-size:16.72px;color:#737373;">Mar</div>
<div class="t" style="left:948.21px;top:490.85px;font-size:16.72px;color:#737373;">Apr</div>
<div class="t" style="left:1008.24px;top:490.85px;font-size:16.72px;color:#737373;">May</div>
<div class="t" style="left:1075.23px;top:490.85px;font-size:16.72px;color:#737373;">Jun</div>
<div class="t" style="left:1169.23px;top:179.68px;font-size:19.04px;color:#0a0a0a;letter-spacing:1.293px;-webkit-text-stroke:0.3px #0a0a0a;">Cost Analysis</div>
<div class="t" style="left:1170.21px;top:216.70px;font-size:33.43px;color:#0a0a0a;transform:scaleX(1.1137);transform-origin:0 0;font-weight:700;">$435</div>
<div class="t" style="left:1257.14px;top:231.85px;font-size:16.72px;color:#737373;font-weight:700;letter-spacing:-0.334px;">/ Avg Monthly spend</div>
<div class="t" style="left:1169.96px;top:257.35px;font-size:16.72px;color:#737373;letter-spacing:0.123px;">-28.5% from last month</div>
<div class="t" style="left:1151.23px;top:490.85px;font-size:16.72px;color:#737373;">Jan</div>
<div class="t" style="left:1213.16px;top:490.85px;font-size:16.72px;color:#737373;">Feb</div>
<div class="t" style="left:1276.56px;top:490.85px;font-size:16.72px;color:#737373;">Mar</div>
<div class="t" style="left:1342.21px;top:490.85px;font-size:16.72px;color:#737373;">Apr</div>
<div class="t" style="left:1402.24px;top:490.85px;font-size:16.72px;color:#737373;">May</div>
<div class="t" style="left:1469.23px;top:490.85px;font-size:16.72px;color:#737373;">Jun</div>
<div class="t" style="left:1563.30px;top:179.68px;font-size:19.04px;color:#0a0a0a;letter-spacing:1.247px;-webkit-text-stroke:0.3px #0a0a0a;">Quality</div>
<div class="t" style="left:1563.41px;top:216.70px;font-size:33.43px;color:#0a0a0a;transform:scaleX(1.1147);transform-origin:0 0;font-weight:700;">289</div>
<div class="t" style="left:1629.34px;top:231.85px;font-size:16.72px;color:#737373;font-weight:700;letter-spacing:-0.424px;">/ Avg Complition Rate</div>
<div class="t" style="left:1563.88px;top:257.35px;font-size:16.72px;color:#737373;letter-spacing:-0.010px;">+12% from last month</div>
<div class="t" style="left:1545.23px;top:490.85px;font-size:16.72px;color:#737373;">Jan</div>
<div class="t" style="left:1607.16px;top:490.85px;font-size:16.72px;color:#737373;">Feb</div>
<div class="t" style="left:1670.56px;top:490.85px;font-size:16.72px;color:#737373;">Mar</div>
<div class="t" style="left:1736.21px;top:490.85px;font-size:16.72px;color:#737373;">Apr</div>
<div class="t" style="left:1796.24px;top:490.85px;font-size:16.72px;color:#737373;">May</div>
<div class="t" style="left:1863.23px;top:490.85px;font-size:16.72px;color:#737373;">Jun</div>
<div class="t" style="left:381.03px;top:577.76px;font-size:19.19px;color:#737373;letter-spacing:-0.143px;">Request</div>
<div class="t" style="left:382.06px;top:604.60px;font-size:22.09px;color:#0a0a0a;transform:scaleX(1.0700);transform-origin:0 0;font-weight:700;letter-spacing:1.322px;">30,304,456</div>
<div class="t" style="left:890.59px;top:591.19px;font-size:19.62px;color:#0a0a0a;letter-spacing:-0.035px;-webkit-text-stroke:0.2px #0a0a0a;">Last 3 months</div>
<div class="t" style="left:391.80px;top:879.91px;font-size:16.35px;color:#737373;">Apr 3</div>
<div class="t" style="left:479.34px;top:879.91px;font-size:16.35px;color:#737373;">Apr 15</div>
<div class="t" style="left:571.11px;top:879.91px;font-size:16.35px;color:#737373;">Apr 27</div>
<div class="t" style="left:663.85px;top:879.91px;font-size:16.35px;color:#737373;">May 9</div>
<div class="t" style="left:751.12px;top:879.91px;font-size:16.35px;color:#737373;">May 21</div>
<div class="t" style="left:850.28px;top:879.91px;font-size:16.35px;color:#737373;">Jun 2</div>
<div class="t" style="left:937.37px;top:879.91px;font-size:16.35px;color:#737373;">Jun 14</div>
<div class="t" style="left:1033.71px;top:879.91px;font-size:16.35px;color:#737373;">Jun 29</div>
<div class="t" style="left:673.19px;top:922.66px;font-size:15.99px;color:#0a0a0a;letter-spacing:0.336px;">Error</div>
<div class="t" style="left:749.09px;top:922.66px;font-size:15.99px;color:#0a0a0a;letter-spacing:0.162px;">Request</div>
<div class="t" style="left:1288.51px;top:578.95px;font-size:21.8px;color:#0a0a0a;letter-spacing:1.887px;-webkit-text-stroke:0.65px #0a0a0a;">Errors</div>
<div class="t" style="left:1274.98px;top:726.54px;font-size:41.42px;color:#0a0a0a;transform:scaleX(0.9270);transform-origin:0 0;font-weight:700;">1,125</div>
<div class="t" style="left:1281.84px;top:772.96px;font-size:15.99px;color:#737373;letter-spacing:0.138px;">Total Errors</div>
<div class="t" style="left:1202.98px;top:907.02px;font-size:16.28px;color:#0a0a0a;letter-spacing:0.897px;">300</div>
<div class="t" style="left:1261.33px;top:907.02px;font-size:16.28px;color:#0a0a0a;letter-spacing:0.774px;">400</div>
<div class="t" style="left:1319.63px;top:907.02px;font-size:16.28px;color:#0a0a0a;">401</div>
<div class="t" style="left:1375.03px;top:907.02px;font-size:16.28px;color:#0a0a0a;letter-spacing:0.694px;">404</div>
<div class="t" style="left:1433.35px;top:907.02px;font-size:16.28px;color:#0a0a0a;letter-spacing:0.913px;">500</div>
<div class="t" style="left:1563.49px;top:578.92px;font-size:21.95px;color:#0a0a0a;letter-spacing:1.720px;-webkit-text-stroke:0.65px #0a0a0a;">Cost Optimization</div>
<div class="t" style="left:1564.30px;top:611.41px;font-size:19.48px;color:#737373;letter-spacing:0.173px;">January - June 2025</div>
<div class="t" style="left:1574.63px;top:679.08px;font-size:17.15px;color:#0a0a0a;-webkit-text-stroke:0.15px #0a0a0a;">January</div>
<div class="t" style="left:1765.25px;top:679.08px;font-size:17.15px;color:#0a0a0a;">800</div>
<div class="t" style="left:1573.49px;top:722.11px;font-size:17.15px;color:#0a0a0a;-webkit-text-stroke:0.15px #0a0a0a;">February</div>
<div class="t" style="left:1704.01px;top:722.11px;font-size:17.15px;color:#0a0a0a;">545</div>
<div class="t" style="left:1573.49px;top:765.14px;font-size:17.15px;color:#0a0a0a;-webkit-text-stroke:0.15px #0a0a0a;">March</div>
<div class="t" style="left:1799.20px;top:765.14px;font-size:17.15px;color:#0a0a0a;">945</div>
<div class="t" style="left:1574.87px;top:808.17px;font-size:17.15px;color:#0a0a0a;-webkit-text-stroke:0.15px #0a0a0a;">April</div>
<div class="t" style="left:1818.29px;top:808.17px;font-size:17.15px;color:#0a0a0a;">1025</div>
<div class="t" style="left:1563.09px;top:854.26px;font-size:19.19px;color:#0a0a0a;letter-spacing:0.182px;-webkit-text-stroke:0.35px #0a0a0a;">Optimization up by 5.2%</div>
<div class="t" style="left:1668.16px;top:905.91px;font-size:19.48px;color:#0a0a0a;letter-spacing:0.258px;-webkit-text-stroke:0.3px #0a0a0a;">Calculation</div>
<div class="t" style="left:380.20px;top:1028.42px;font-size:21.95px;color:#0a0a0a;letter-spacing:1.953px;-webkit-text-stroke:0.65px #0a0a0a;">Request / Complition Tokens</div>
<div class="t" style="left:1505.50px;top:1020.20px;font-size:17.01px;color:#737373;letter-spacing:0.156px;">prompt</div>
<div class="t" style="left:1728.08px;top:1020.20px;font-size:17.01px;color:#737373;">complition</div>
</body></html>
